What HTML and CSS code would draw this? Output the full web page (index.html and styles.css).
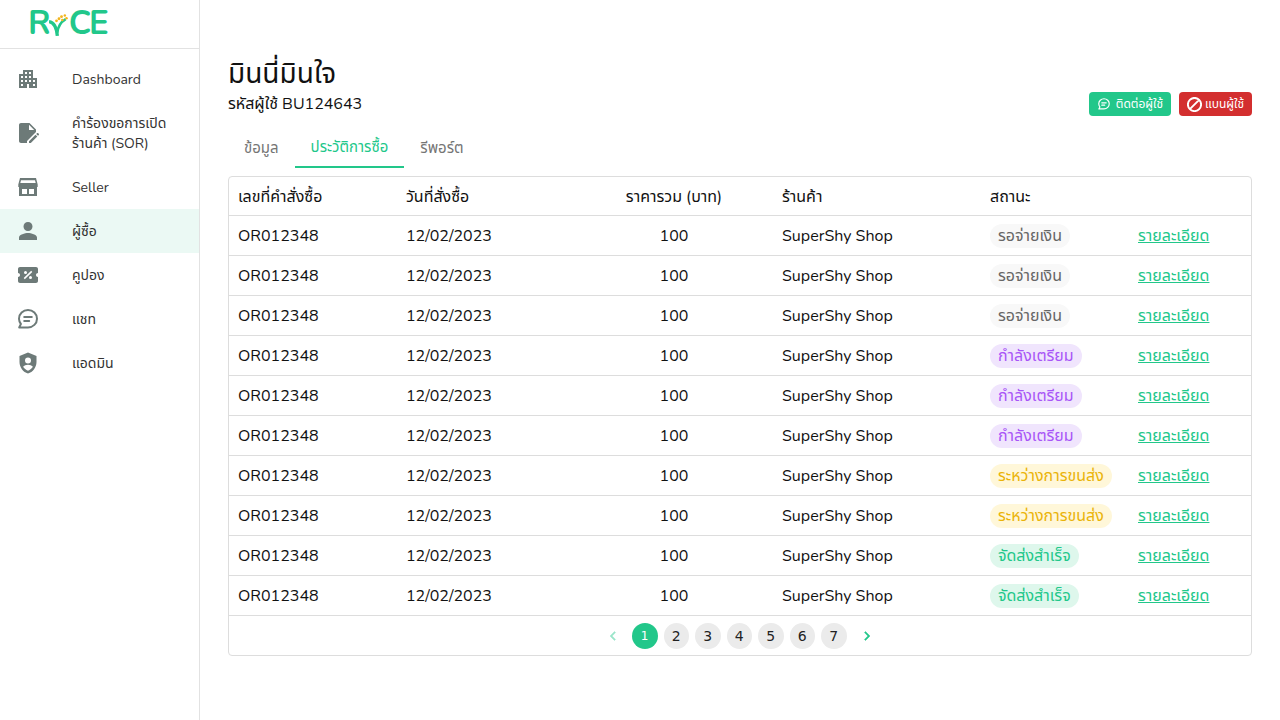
FILE: index.html

```html
<!DOCTYPE html>
<html lang="th">
<head>
    <meta charset="UTF-8">
    <meta name="viewport" content="width=device-width, initial-scale=1.0">
    <title>RYCE - ผู้ซื้อ</title>
    <link rel="stylesheet" href="styles.css">
</head>
<body>
    <aside class="sidebar">
        <div class="logo">
            <span class="logo-text">R</span>
            <svg class="logo-mark" viewBox="0 0 24 28" width="20" height="24">
                <path d="M0 10c6 1 9 6 10 17" fill="none" stroke="#22c78a" stroke-width="4"/>
                <path d="M10 23c1-8 5-13 10-16" fill="none" stroke="#22c78a" stroke-width="3"/>
                <g fill="#f2b51d">
                    <circle cx="9" cy="9" r="1.7"/><circle cx="12" cy="6.5" r="1.7"/><circle cx="15" cy="4" r="1.7"/>
                    <circle cx="19" cy="2.5" r="1.500"/><circle cx="16" cy="8" r="1.500"/><circle cx="21" cy="6" r="1.500"/>
                </g>
            </svg>
            <span class="logo-text">CE</span>
        </div>
        <nav class="menu">
            <a class="menu-item">
                <svg class="menu-icon" viewBox="0 0 24 24"><path d="M17 11V3H7v4H3v14h8v-4h2v4h8V11h-4zM7 19H5v-2h2v2zm0-4H5v-2h2v2zm0-4H5V9h2v2zm4 4H9v-2h2v2zm0-4H9V9h2v2zm0-4H9V5h2v2zm4 8h-2v-2h2v2zm0-4h-2V9h2v2zm0-4h-2V5h2v2zm4 12h-2v-2h2v2zm0-4h-2v-2h2v2z"/></svg>
                <span>Dashboard</span>
            </a>
            <a class="menu-item tall">
                <svg class="menu-icon" viewBox="0 0 24 24"><path d="M5 2h8.500L20 8.500V11l-9 9v2H5c-1.100 0-2-.9-2-2V4c0-1.100.9-2 2-2zm8 1.800V9h5.200L13 3.800zM13 22v-1.800l6.500-6.500 1.800 1.800L14.800 22H13zm7.200-9 .8-.8c.4-.3.900-.3 1.200 0l.6.600c.3.300.3.800 0 1.200l-.8.8-1.800-1.800z"/></svg>
                <span>คำร้องขอการเปิด<br>ร้านค้า (SOR)</span>
            </a>
            <a class="menu-item">
                <svg class="menu-icon" viewBox="0 0 24 24"><path fill-rule="evenodd" d="M4 3h16l1.700 6.500v2.500H21v9H3v-9h-.7V9.500L4 3zm1 2.200L4.300 8h15.400L19 5.200H5zM6 14v5h5v-5H6zm7 0v5h5v-5h-5z"/></svg>
                <span>Seller</span>
            </a>
            <a class="menu-item active">
                <svg class="menu-icon" viewBox="0 0 24 24"><path d="M12 12c2.600 0 4.500-2 4.500-4.500S14.600 3 12 3 7.500 5 7.500 7.500 9.400 12 12 12zm0 2c-3 0-9 1.500-9 4.500V21h18v-2.500c0-3-6-4.500-9-4.500z"/></svg>
                <span>ผู้ซื้อ</span>
            </a>
            <a class="menu-item">
                <svg class="menu-icon" viewBox="0 0 24 24"><path fill-rule="evenodd" d="M22 10V6c0-1.100-.9-2-2-2H4c-1.100 0-1.990.9-1.990 2v4c1.100 0 1.990.9 1.990 2s-.89 2-2 2v4c0 1.100.9 2 2 2h16c1.100 0 2-.9 2-2v-4c-1.100 0-2-.9-2-2s.9-2 2-2zM9.500 8a1.500 1.500 0 1 1 0 3 1.500 1.500 0 0 1 0-3zm5 5a1.500 1.500 0 1 1 0 3 1.500 1.500 0 0 1 0-3zM8.800 16.200l-1.100-1.100 7.500-7.300 1.100 1.100-7.500 7.300z"/></svg>
                <span>คูปอง</span>
            </a>
            <a class="menu-item">
                <svg class="menu-icon" viewBox="0 0 24 24"><path class="line-icon" d="M12 3c5 0 9 3.800 9 8.700s-4 8.700-9 8.700H3.200l1.700-3.400A8.600 8.600 0 0 1 3 11.700C3 6.800 7 3 12 3zM8.200 10h7.600M8.200 14h5"/></svg>
                <span>แชท</span>
            </a>
            <a class="menu-item">
                <svg class="menu-icon" viewBox="0 0 24 24"><path fill-rule="evenodd" d="M12 1.500 3.500 5v6c0 5.300 3.600 10.200 8.500 11.500 4.900-1.300 8.500-6.200 8.500-11.500V5L12 1.500zM12 6.500a3 3 0 1 1 0 6 3 3 0 0 1 0-6zm0 13.200c-2.100-.7-3.800-2.100-4.900-3.900 1-1.300 3-2 4.900-2s3.900.7 4.900 2c-1.100 1.800-2.800 3.200-4.900 3.900z"/></svg>
                <span>แอดมิน</span>
            </a>
        </nav>
    </aside>

    <main class="content">
        <div class="page-head">
            <div>
                <h1>มินนี่มินใจ</h1>
                <p class="user-code">รหัสผู้ใช้ BU124643</p>
            </div>
            <div class="actions">
                <button class="btn btn-green" type="button">
                    <svg class="btn-icon" viewBox="0 0 24 24"><path class="line-icon" d="M12 3c5 0 9 3.800 9 8.700s-4 8.700-9 8.700H3.200l1.700-3.400A8.600 8.600 0 0 1 3 11.700C3 6.800 7 3 12 3zM8.200 10h7.600M8.200 14h5"/></svg>
                    ติดต่อผู้ใช้
                </button>
                <button class="btn btn-red" type="button">
                    <svg class="btn-icon block-icon" viewBox="2 2 20 20"><path class="line-icon block-line" d="M12 3.200a8.800 8.800 0 1 0 0 17.600 8.800 8.800 0 0 0 0-17.600zM18.200 5.800 5.800 18.200"/></svg>
                    แบนผู้ใช้
                </button>
            </div>
        </div>

        <div class="tabs">
            <a class="tab">ข้อมูล</a>
            <a class="tab current">ประวัติการซื้อ</a>
            <a class="tab">รีพอร์ต</a>
        </div>

        <div class="table-box">
            <table class="orders">
                <thead>
                    <tr>
                        <th class="col-id">เลขที่คำสั่งซื้อ</th>
                        <th class="col-date">วันที่สั่งซื้อ</th>
                        <th class="col-price">ราคารวม (บาท)</th>
                        <th class="col-shop">ร้านค้า</th>
                        <th class="col-status">สถานะ</th>
                        <th class="col-link"></th>
                    </tr>
                </thead>
                <tbody id="rows">
                    <tr><td>OR012348</td><td>12/02/2023</td><td class="price">100</td><td>SuperShy Shop</td><td><span class="chip chip-grey">รอจ่ายเงิน</span></td><td><a class="detail">รายละเอียด</a></td></tr>
                    <tr><td>OR012348</td><td>12/02/2023</td><td class="price">100</td><td>SuperShy Shop</td><td><span class="chip chip-grey">รอจ่ายเงิน</span></td><td><a class="detail">รายละเอียด</a></td></tr>
                    <tr><td>OR012348</td><td>12/02/2023</td><td class="price">100</td><td>SuperShy Shop</td><td><span class="chip chip-grey">รอจ่ายเงิน</span></td><td><a class="detail">รายละเอียด</a></td></tr>
                    <tr><td>OR012348</td><td>12/02/2023</td><td class="price">100</td><td>SuperShy Shop</td><td><span class="chip chip-purple">กำลังเตรียม</span></td><td><a class="detail">รายละเอียด</a></td></tr>
                    <tr><td>OR012348</td><td>12/02/2023</td><td class="price">100</td><td>SuperShy Shop</td><td><span class="chip chip-purple">กำลังเตรียม</span></td><td><a class="detail">รายละเอียด</a></td></tr>
                    <tr><td>OR012348</td><td>12/02/2023</td><td class="price">100</td><td>SuperShy Shop</td><td><span class="chip chip-purple">กำลังเตรียม</span></td><td><a class="detail">รายละเอียด</a></td></tr>
                    <tr><td>OR012348</td><td>12/02/2023</td><td class="price">100</td><td>SuperShy Shop</td><td><span class="chip chip-yellow">ระหว่างการขนส่ง</span></td><td><a class="detail">รายละเอียด</a></td></tr>
                    <tr><td>OR012348</td><td>12/02/2023</td><td class="price">100</td><td>SuperShy Shop</td><td><span class="chip chip-yellow">ระหว่างการขนส่ง</span></td><td><a class="detail">รายละเอียด</a></td></tr>
                    <tr><td>OR012348</td><td>12/02/2023</td><td class="price">100</td><td>SuperShy Shop</td><td><span class="chip chip-green">จัดส่งสำเร็จ</span></td><td><a class="detail">รายละเอียด</a></td></tr>
                    <tr><td>OR012348</td><td>12/02/2023</td><td class="price">100</td><td>SuperShy Shop</td><td><span class="chip chip-green">จัดส่งสำเร็จ</span></td><td><a class="detail">รายละเอียด</a></td></tr>
                </tbody>
            </table>
            <div class="pager">
                <button class="page-arrow faded" type="button"><svg viewBox="0 0 24 24"><path d="M15.410 7.410 14 6l-6 6 6 6 1.410-1.410L10.830 12z"/></svg></button>
                <button class="page-num on" type="button">1</button>
                <button class="page-num" type="button">2</button>
                <button class="page-num" type="button">3</button>
                <button class="page-num" type="button">4</button>
                <button class="page-num" type="button">5</button>
                <button class="page-num" type="button">6</button>
                <button class="page-num" type="button">7</button>
                <button class="page-arrow next" type="button"><svg viewBox="0 0 24 24"><path d="M10 6 8.590 7.410 13.170 12l-4.580 4.590L10 18l6-6z"/></svg></button>
            </div>
        </div>
    </main>
</body>
</html>
```

FILE: styles.css

```css
* {
    box-sizing: border-box;
}

body {
    margin: 0;
    height: 100vh;
    display: flex;
    overflow: hidden;
    background-color: #fff;
    color: #111;
    font-family: Nunito, "Noto Sans Thai", sans-serif;
    font-size: 16px;
}

/* sidebar */
.sidebar {
    width: 200px;
    flex-shrink: 0;
    border-right: 1px solid #e2e2e2;
}

.logo {
    height: 49px;
    padding: 4px 0 0 28px;
    display: flex;
    align-items: flex-start;
    border-bottom: 1px solid #e2e2e2;
}

.logo-text {
    color: #22c78a;
    font-size: 33px;
    line-height: 40px;
    font-weight: 700;
    letter-spacing: -2px;
}

.logo-mark {
    margin-top: 9px;
}

.menu {
    padding-top: 8px;
}

.menu-item {
    height: 44px;
    padding-left: 16px;
    display: flex;
    align-items: center;
    gap: 32px;
    color: #333;
    font-size: 14px;
    line-height: 20px;
}

.menu-item span {
    padding-top: 2px;
}

.menu-item.tall {
    height: 64px;
}

.menu-item.active {
    background-color: #ebf9f4;
}

.menu-icon {
    width: 24px;
    height: 24px;
    flex-shrink: 0;
    fill: #6d7a78;
}

.line-icon {
    fill: none;
    stroke: #fff;
    stroke-width: 2;
    stroke-linecap: round;
    stroke-linejoin: round;
}

.menu-icon .line-icon {
    stroke: #6d7a78;
}

/* main */
.content {
    flex: 1;
    min-width: 0;
    padding: 56px 28px 0;
}

.page-head {
    display: flex;
    justify-content: space-between;
    align-items: flex-end;
}

h1 {
    margin: 0;
    font-size: 28px;
    line-height: 36px;
    font-weight: 400;
}

.user-code {
    margin: 0;
    line-height: 24px;
}

.actions {
    display: flex;
    gap: 8px;
}

.btn {
    height: 24px;
    padding: 0 8px;
    display: flex;
    align-items: center;
    border: none;
    border-radius: 4px;
    color: #fff;
    font-family: inherit;
    font-size: 12px;
}

.btn-green {
    gap: 5px;
    background-color: #22c78a;
}

.btn-red {
    gap: 3px;
    background-color: #d32f2f;
}

.btn-icon {
    width: 14px;
    height: 14px;
}

.block-icon {
    width: 15px;
    height: 15px;
}

.block-line {
    stroke-width: 2.6;
    stroke-linecap: butt;
}

/* tabs */
.tabs {
    height: 40px;
    margin: 12px 0 8px;
    display: flex;
}

.tab {
    padding: 0 16px;
    display: flex;
    align-items: center;
    color: #757575;
    font-size: 15px;
}

.tab.current {
    color: #22c78a;
    border-bottom: 2px solid #22c78a;
}

/* table */
.table-box {
    border: 1px solid #ddd;
    border-radius: 4px;
}

.orders {
    width: 100%;
    table-layout: fixed;
    border-collapse: collapse;
}

.orders th,
.orders td {
    padding: 2px 10px 0;
    text-align: left;
    font-weight: 400;
    border-bottom: 1px solid #ddd;
}

.orders th:first-child,
.orders td:first-child {
    padding-left: 9px;
}

.orders th {
    height: 38px;
    padding-top: 3px;
}

.orders td {
    height: 40px;
}

.col-id { width: 167px; }
.col-date { width: 180px; }
.col-price { width: 196px; }
.col-shop { width: 208px; }
.col-status { width: 148px; }

.orders .col-price,
.orders .price {
    text-align: center;
}

.chip {
    display: inline-block;
    padding: 0 8px;
    height: 24px;
    line-height: 24px;
    border-radius: 12px;
    white-space: nowrap;
    vertical-align: middle;
}

.chip-grey { background-color: #f8f8f8; color: #666; }
.chip-purple { background-color: #f0e5fd; color: #a855f7; }
.chip-yellow { background-color: #fff7d9; color: #eab308; }
.chip-green { background-color: #def7ec; color: #22c78a; }

.detail {
    color: #22c78a;
    text-decoration: underline;
}

/* pagination */
.pager {
    height: 39px;
    padding: 1px 0 0;
    display: flex;
    justify-content: center;
    align-items: center;
    gap: 6px;
}

.page-num,
.page-arrow {
    width: 25.5px;
    height: 26px;
    padding: 0;
    border: none;
    border-radius: 50%;
    font-family: "DejaVu Sans", sans-serif;
    font-size: 14px;
    color: #222;
}

.page-num {
    background-color: #ebebeb;
}

.page-num.on {
    width: 26px;
    background-color: #22c78a;
    color: #fff;
    font-size: 12px;
    font-weight: 400;
}

.page-arrow {
    width: 26px;
    background: none;
    display: flex;
    align-items: center;
    justify-content: center;
}

.page-arrow.next {
    width: 28px;
}

.page-arrow svg {
    width: 18px;
    height: 18px;
    fill: #22c78a;
    stroke: #22c78a;
    stroke-width: 0.6;
}

.page-arrow.faded svg {
    opacity: 0.45;
}
```
